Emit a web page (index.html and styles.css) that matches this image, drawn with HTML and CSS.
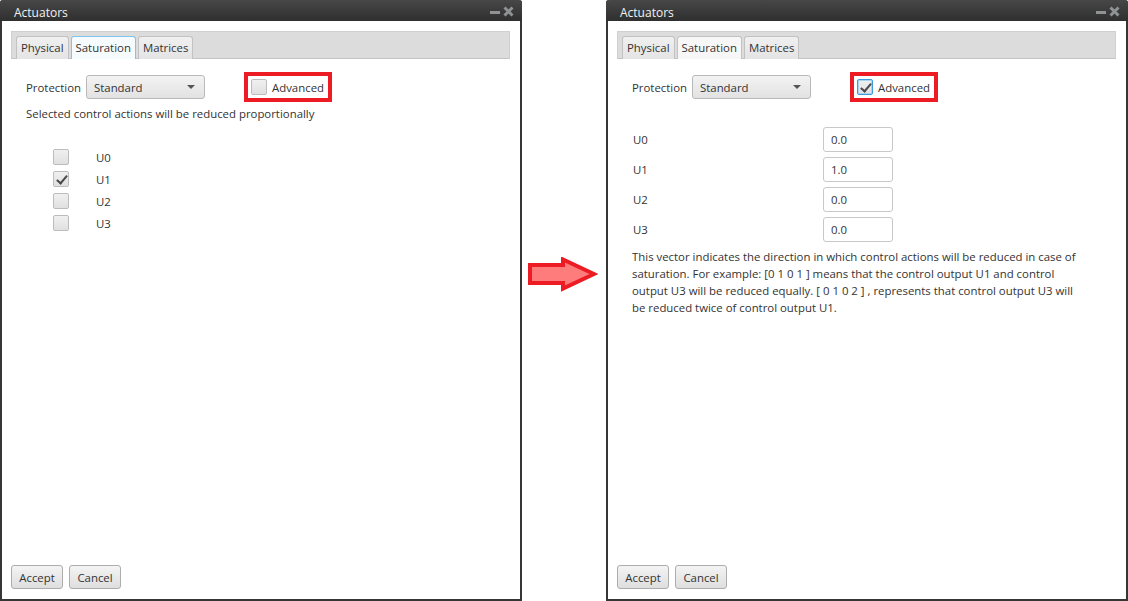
FILE: index.html
```
<!DOCTYPE html>
<html>
	<head>
		<meta charset="UTF-8">
		<title>Actuators</title>
		<link rel="stylesheet" href="styles.css">
	</head>
	<body>
		<div class="stage">
			<section class="window">
				<header class="titlebar">
					<span class="title">Actuators</span>
					<span class="winctl">
						<svg width="24" height="12" viewBox="0 0 24 12">
							<rect x="0" y="5" width="10" height="3" fill="#8f9393"/>
							<path d="M14.5 1.5 L22.5 9.5 M22.5 1.5 L14.5 9.5" stroke="#8f9393" stroke-width="3"/>
						</svg>
					</span>
				</header>
				<div class="content">
					<nav class="tabs">
						<span class="tab">Physical</span>
						<span class="tab active focused">Saturation</span>
						<span class="tab">Matrices</span>
					</nav>
					<div class="panel">
						<div class="protection">
							<label class="lbl">Protection</label>
							<div class="combo">Standard<span class="caret"></span></div>
							<div class="highlight">
								<span class="check"></span>
								<span>Advanced</span>
							</div>
						</div>
						<p class="note">Selected control actions will be reduced proportionally</p>
						<ul class="channels">
							<li><span class="check"></span><span>U0</span></li>
							<li><span class="check on"></span><span>U1</span></li>
							<li><span class="check"></span><span>U2</span></li>
							<li><span class="check"></span><span>U3</span></li>
						</ul>
					</div>
					<div class="actions">
						<button class="btn">Accept</button>
						<button class="btn">Cancel</button>
					</div>
				</div>
			</section>

			<div class="gap">
				<svg class="arrow" width="70" height="35" viewBox="0 0 70 35">
					<path d="M2 8 H35 V2.5 L66 17 L35 31.5 V26 H2 Z" fill="#ff7c7c" stroke="#ed1c24" stroke-width="4" stroke-linejoin="miter"/>
				</svg>
			</div>

			<section class="window">
				<header class="titlebar">
					<span class="title">Actuators</span>
					<span class="winctl">
						<svg width="24" height="12" viewBox="0 0 24 12">
							<rect x="0" y="5" width="10" height="3" fill="#8f9393"/>
							<path d="M14.5 1.5 L22.5 9.5 M22.5 1.5 L14.5 9.5" stroke="#8f9393" stroke-width="3"/>
						</svg>
					</span>
				</header>
				<div class="content">
					<nav class="tabs">
						<span class="tab">Physical</span>
						<span class="tab active">Saturation</span>
						<span class="tab">Matrices</span>
					</nav>
					<div class="panel">
						<div class="protection">
							<label class="lbl">Protection</label>
							<div class="combo">Standard<span class="caret"></span></div>
							<div class="highlight">
								<span class="check on focused"></span>
								<span>Advanced</span>
							</div>
						</div>
						<div class="weights">
							<label>U0</label><input type="text" value="0.0">
							<label>U1</label><input type="text" value="1.0">
							<label>U2</label><input type="text" value="0.0">
							<label>U3</label><input type="text" value="0.0">
						</div>
						<p class="explain">This vector indicates the direction in which control actions will be reduced in case of<br>saturation. For example: [0 1 0 1 ] means that the control output U1 and control<br>output U3 will be reduced equally. [ 0 1 0 2 ] , represents that control output U3 will<br>be reduced twice of control output U1.</p>
					</div>
					<div class="actions">
						<button class="btn">Accept</button>
						<button class="btn">Cancel</button>
					</div>
				</div>
			</section>
		</div>
	</body>
</html>
```

FILE: styles.css
```
* {
	margin: 0;
	padding: 0;
	box-sizing: border-box;
}
body {
	background: #fff;
	font-family: "Open Sans", "Noto Sans", sans-serif;
	font-size: 11.4px;
	color: #333;
}
.stage {
	display: flex;
	width: 1128px;
	height: 601px;
}
.window {
	display: flex;
	flex-direction: column;
	width: 522px;
	height: 601px;
	border: 2px solid #363636;
	border-top: none;
	border-radius: 3px 3px 0 0;
	background: #fff;
}
.titlebar {
	display: flex;
	align-items: center;
	justify-content: space-between;
	height: 21px;
	margin: 0 -2px;
	padding: 0 8px 0 14px;
	background: linear-gradient(#474747, #2f2f2f);
	border-radius: 3px 3px 0 0;
}
.title {
	color: #f2f2f2;
	font-size: 12px;
	line-height: 21px;
	padding-top: 3px;
}
.winctl svg {
	display: block;
	margin-top: 2px;
}
.content {
	flex: 1;
	display: flex;
	flex-direction: column;
}
.tabs {
	display: flex;
	align-items: flex-end;
	gap: 2px;
	height: 28px;
	margin: 10px 10px 0 9px;
	padding-left: 4px;
	background: #dcdcdc;
	border: 1px solid #d0d0d0;
	border-bottom-color: #c4c4c4;
}
.tab {
	height: 23px;
	padding: 0 4px;
	line-height: 22px;
	background: linear-gradient(#f0f0f0, #e4e4e4);
	border: 1px solid #c2c2c2;
	border-bottom: none;
	border-radius: 3px 3px 0 0;
	margin-bottom: -1px;
}
.tab.active {
	background: #f7f7f7;
}
.tab.focused {
	background: #f6fbfe;
	border-color: #7fc4ee;
}
.panel {
	flex: 1;
	padding: 16px 0 0 24px;
}
.protection {
	display: flex;
	align-items: center;
	height: 24px;
}
.lbl {
	width: 60px;
	padding-top: 1px;
}
.combo {
	position: relative;
	width: 119px;
	height: 24px;
	padding: 1px 0 0 7px;
	line-height: 22px;
	background: linear-gradient(#f3f3f3, #e2e2e2);
	border: 1px solid #b9b9b9;
	border-radius: 3px;
}
.caret {
	position: absolute;
	right: 9px;
	top: 9px;
	border: 4px solid transparent;
	border-top: 4px solid #555;
	border-bottom: none;
}
.highlight {
	display: flex;
	align-items: center;
	gap: 5px;
	width: 88px;
	height: 30px;
	margin-left: 39px;
	padding-left: 3px;
	border: 4px solid #ed1c24;
}
.check {
	position: relative;
	display: inline-block;
	width: 16px;
	height: 16px;
	background: linear-gradient(#f0f0f0, #e0e0e0);
	border: 1px solid #bcbcbc;
	border-radius: 2px;
}
.check.on::after {
	content: "";
	position: absolute;
	left: 5px;
	top: 1px;
	width: 4px;
	height: 9px;
	border: solid #4a4a4a;
	border-width: 0 2px 2px 0;
	transform: rotate(40deg);
}
.check.focused {
	border-color: #3d9bdc;
	box-shadow: inset 0 0 0 1px #a8d5f2;
}
.note {
	margin-top: 7px;
	line-height: 16px;
}
.channels {
	list-style: none;
	margin: 24px 0 0 27px;
}
.channels li {
	display: flex;
	align-items: center;
	height: 22px;
}
.channels .check {
	margin-right: 27px;
}
.weights {
	display: grid;
	grid-template-columns: 190px 70px;
	grid-auto-rows: 30px;
	align-items: center;
	margin: 25px 0 0 1px;
}
.weights input {
	width: 70px;
	height: 25px;
	padding-left: 7px;
	font: inherit;
	color: #333;
	background: #fff;
	border: 1px solid #c8c8c8;
	border-radius: 3px;
}
.explain {
	margin-top: 4px;
	line-height: 17px;
	white-space: nowrap;
}
.actions {
	display: flex;
	gap: 6px;
	padding: 0 0 10px 9px;
}
.btn {
	width: 52px;
	height: 24px;
	font: inherit;
	color: #333;
	background: linear-gradient(#f4f4f4, #dedede);
	border: 1px solid #adadad;
	border-radius: 3px;
}
.gap {
	width: 84px;
	padding: 257px 0 0 6px;
}
.arrow {
	display: block;
}
```
